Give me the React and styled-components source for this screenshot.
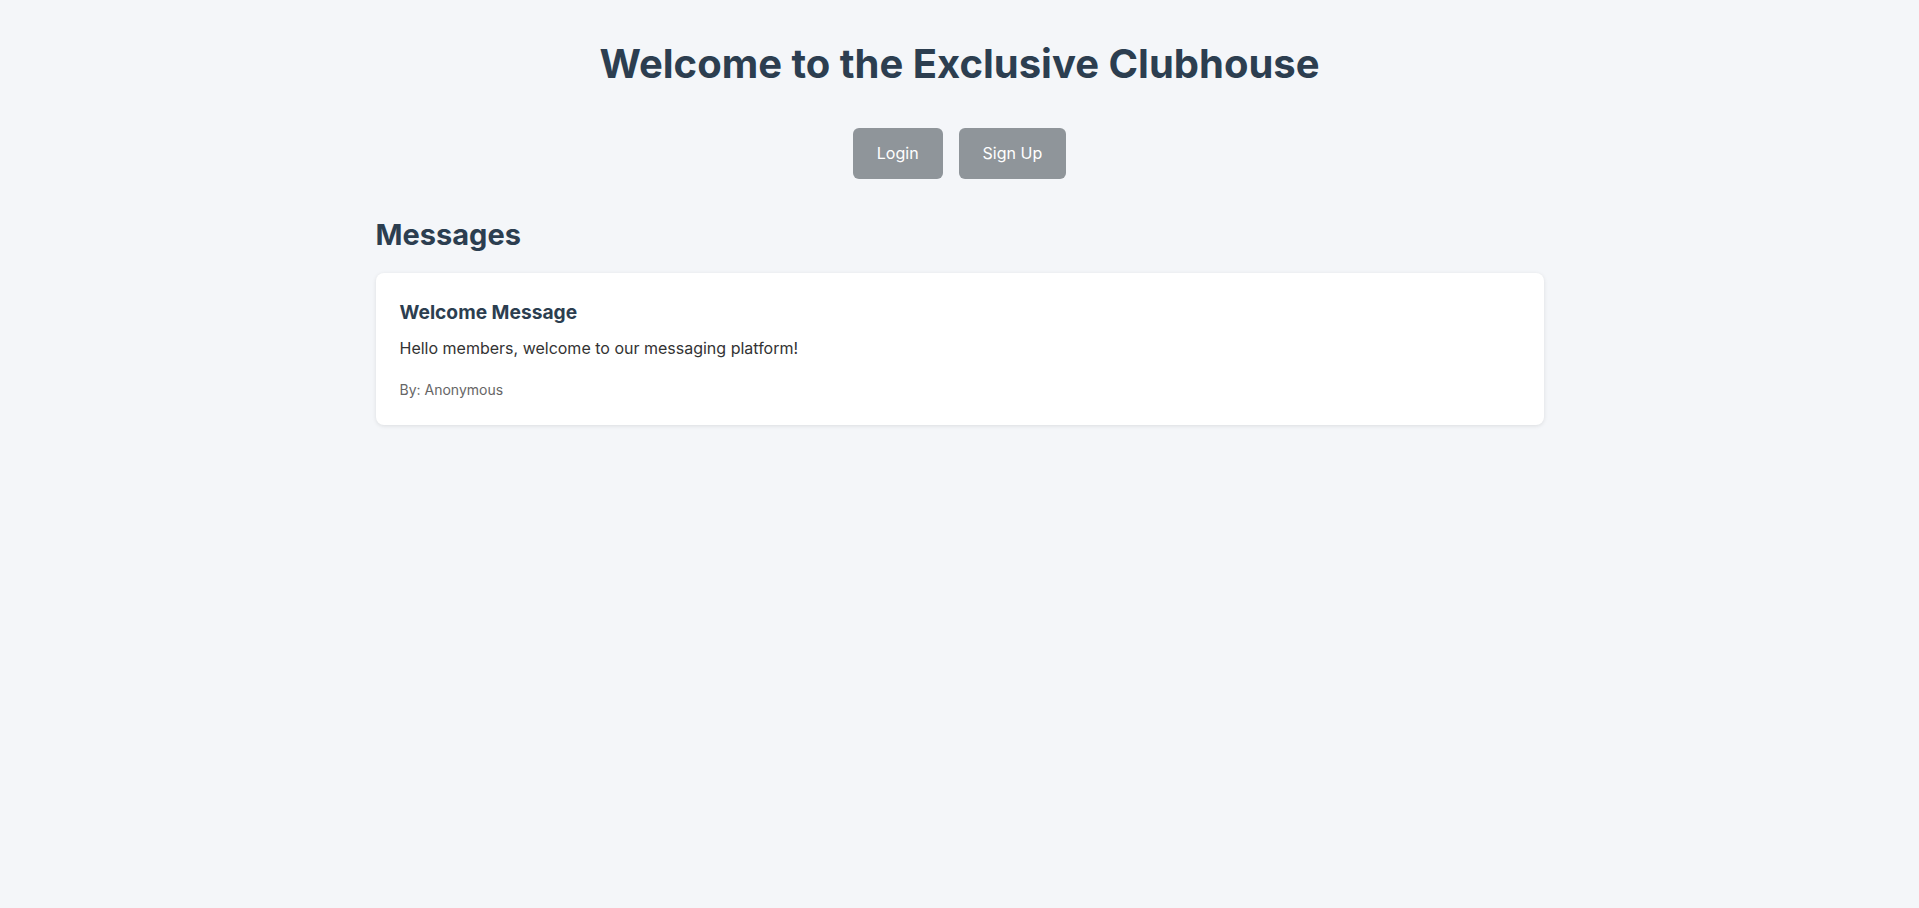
import React from "react";
import styled, { createGlobalStyle } from "styled-components";

const Global = createGlobalStyle`
  html, body { margin: 0; padding: 0; background: #f4f6f9; }
  body { font-family: Inter, "Noto Sans", sans-serif; color: #2c3e50; }
  * { box-sizing: border-box; }
`;

const Page = styled.div`
  max-width: 1200px;
  margin: 0 auto;
  padding: 40px 16px 40px;
`;

const Title = styled.h1`
  margin: 0;
  font-size: 40px;
  line-height: 48px;
  font-weight: 700;
  text-align: center;
  color: #2c3e50;
`;

const Actions = styled.div`
  display: flex;
  justify-content: center;
  gap: 16px;
  margin-top: 40px;
`;

const Button = styled.button`
  font-family: Inter, sans-serif;
  font-size: 16px;
  line-height: 19px;
  padding: 16px 24px;
  border: none;
  border-radius: 6px;
  background: #8f959a;
  color: #ffffff;
  cursor: pointer;
`;

const SectionTitle = styled.h2`
  margin: 38px 0 21px;
  font-size: 29px;
  line-height: 35px;
  font-weight: 700;
  color: #2c3e50;
`;

const Card = styled.div`
  background: #ffffff;
  border-radius: 8px;
  padding: 28px 24px 27px;
  box-shadow: 0 1px 4px rgba(0, 0, 0, 0.1);
`;

const CardTitle = styled.h3`
  margin: 0 0 15px;
  font-size: 19.2px;
  line-height: 23px;
  font-weight: 700;
  color: #2c3e50;
`;

const CardBody = styled.p`
  margin: 0 0 23px;
  font-size: 16px;
  line-height: 19px;
  color: #333333;
`;

const Author = styled.p`
  margin: 0;
  font-size: 14px;
  line-height: 17px;
  color: #666666;
`;

export default function App() {
  return (
    <>
      <Global />
      <Page>
        <Title>Welcome to the Exclusive Clubhouse</Title>
        <Actions>
          <Button>Login</Button>
          <Button>Sign Up</Button>
        </Actions>
        <SectionTitle>Messages</SectionTitle>
        <Card>
          <CardTitle>Welcome Message</CardTitle>
          <CardBody>Hello members, welcome to our messaging platform!</CardBody>
          <Author>By: Anonymous</Author>
        </Card>
      </Page>
    </>
  );
}
